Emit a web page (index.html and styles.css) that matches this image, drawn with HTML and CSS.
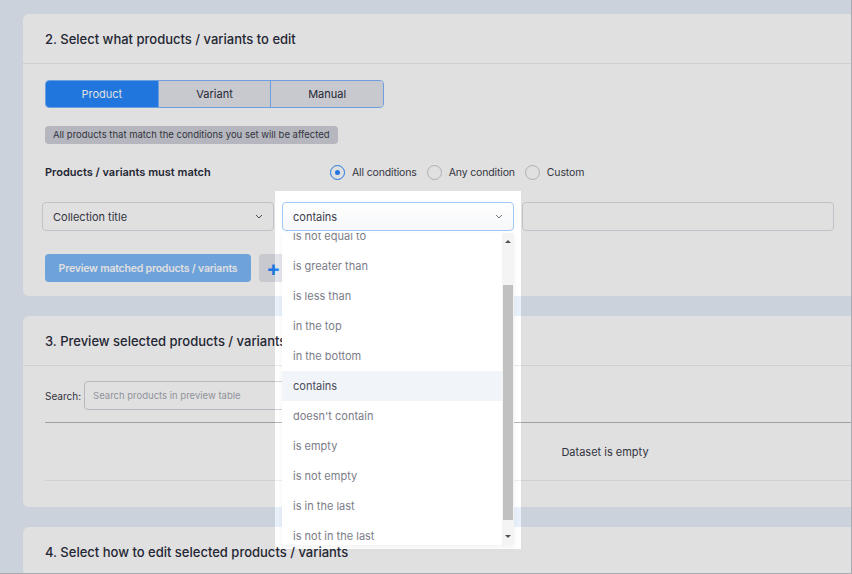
FILE: index.html
```html
<!DOCTYPE html>
<html lang="en">
<head>
    <meta charset="UTF-8">
    <meta name="viewport" content="width=device-width, initial-scale=1.0">
    <title>Bulk edit products</title>
    <link rel="stylesheet" href="styles.css">
</head>
<body>
    <div class="frame">
        <main class="page">
            <section class="card">
                <div class="card-head">
                    <h2>2. Select what products / variants to edit</h2>
                </div>
                <div class="card-body rules-body">
                    <div class="segmented">
                        <button class="seg active">Product</button>
                        <button class="seg">Variant</button>
                        <button class="seg">Manual</button>
                    </div>
                    <div class="hint-row"><span class="hint">All products that match the conditions you set will be affected</span></div>
                    <div class="match-row">
                        <strong>Products / variants must match</strong>
                        <label class="radio"><span class="dot checked"></span>All conditions</label>
                        <label class="radio"><span class="dot"></span>Any condition</label>
                        <label class="radio"><span class="dot"></span>Custom</label>
                    </div>
                    <div class="cond-row">
                        <div class="select">
                            <span>Collection title</span>
                            <svg class="chev" width="8" height="5" viewBox="0 0 8 5"><polyline points="1,1 4,4 7,1" fill="none" stroke="#555" stroke-width="1"/></svg>
                        </div>
                        <div class="select focused">
                            <span>contains</span>
                            <svg class="chev" width="8" height="5" viewBox="0 0 8 5"><polyline points="1,1 4,4 7,1" fill="none" stroke="#777" stroke-width="1"/></svg>
                            <div class="dropdown">
                                <ul class="options">
                                    <li class="cut">is not equal to</li>
                                    <li>is greater than</li>
                                    <li>is less than</li>
                                    <li>in the top</li>
                                    <li>in the bottom</li>
                                    <li class="hover">contains</li>
                                    <li>doesn't contain</li>
                                    <li>is empty</li>
                                    <li>is not empty</li>
                                    <li>is in the last</li>
                                    <li>is not in the last</li>
                                </ul>
                                <div class="scrollbar">
                                    <div class="arrow up"></div>
                                    <div class="track"><div class="thumb"></div></div>
                                    <div class="arrow down"></div>
                                </div>
                            </div>
                        </div>
                        <div class="text-input"></div>
                    </div>
                    <div class="actions">
                        <button class="btn-preview">Preview matched products / variants</button>
                        <button class="btn-add">+</button>
                    </div>
                </div>
            </section>

            <section class="card">
                <div class="card-head">
                    <h2>3. Preview selected products / variants</h2>
                </div>
                <div class="card-body preview-body">
                    <div class="search-row">
                        <span>Search:</span>
                        <div class="search-input">Search products in preview table</div>
                    </div>
                    <div class="table">
                        <div class="empty-row">Dataset is empty</div>
                    </div>
                </div>
            </section>

            <section class="card">
                <div class="card-head">
                    <h2>4. Select how to edit selected products / variants</h2>
                </div>
            </section>
        </main>

        <!-- tour highlight: dims the page around the open dropdown -->
        <div class="spotlight"></div>
    </div>
</body>
</html>
```

FILE: styles.css
```css
body {
    margin: 0;
    font-family: Inter, 'Open Sans', sans-serif;
    color: #2a2c3b;
    overflow: hidden;
}
.frame {
    position: relative;
    width: 851px;
    height: 573px;
    overflow: hidden;
    background-color: #e8f0fa;
    border-right: 1px solid #a9acb0;
    border-bottom: 1px solid #a9acb0;
}
.page {
    padding: 14px 0 0 23px;
    display: flex;
    flex-direction: column;
    gap: 20px;
}
.card {
    width: 1164px;
    background-color: #ffffff;
    border-radius: 6px;
}
.card-head {
    height: 50px;
    box-sizing: border-box;
    padding: 0 22px;
    display: flex;
    align-items: center;
    border-bottom: 1px solid #e9edf3;
}
.card-head h2 {
    margin: 0;
    font-size: 13px;
    font-weight: 500;
    color: #2a2c3b;
}
.card-body {
    padding: 15px 22px 14px;
}
.rules-body {
    padding-top: 16px;
}
.segmented {
    display: flex;
    width: 339px;
    height: 28px;
    border: 1px solid #7cb4ff;
    border-radius: 4px;
    overflow: hidden;
    box-sizing: border-box;
}
.seg {
    flex: 1;
    border: none;
    border-left: 1px solid #7cb4ff;
    background-color: #e4e5ec;
    font-family: inherit;
    font-size: 11px;
    color: #2a2c3b;
    padding: 0;
}
.seg:first-child {
    border-left: none;
}
.seg.active {
    background-color: #2687fd;
    color: #ffffff;
}
.hint-row {
    display: flex;
    margin-top: 18px;
}
.hint {
    height: 18px;
    line-height: 18px;
    padding: 0 8px;
    background-color: #ced0d9;
    border-radius: 4px;
    font-size: 9.5px;
    color: #3a3c48;
}
.match-row {
    display: flex;
    align-items: center;
    height: 18px;
    margin-top: 19px;
    font-size: 11px;
}
.match-row strong {
    width: 285px;
    font-weight: 600;
}
.radio {
    display: flex;
    align-items: center;
    gap: 7px;
    margin-right: 10px;
    font-size: 10.5px;
    letter-spacing: -0.15px;
    color: #3c3e4c;
}
.dot {
    width: 13px;
    height: 13px;
    border: 1px solid #c6c9d1;
    border-radius: 50%;
    display: flex;
    align-items: center;
    justify-content: center;
}
.dot.checked {
    border-color: #2687fd;
}
.dot.checked::after {
    content: '';
    width: 5px;
    height: 5px;
    border-radius: 50%;
    background-color: #2687fd;
}
.cond-row {
    display: flex;
    gap: 8px;
    margin: 21px 0 0 -3px;
}
.select {
    width: 232px;
    height: 29px;
    box-sizing: border-box;
    border: 1px solid #dcdfe6;
    border-radius: 4px;
    padding: 0 10px;
    display: flex;
    align-items: center;
    justify-content: space-between;
    font-size: 11px;
    color: #3a3c4a;
}
.select.focused {
    position: relative;
    border-color: #9fc8f7;
    background: linear-gradient(#ffffff, #f6f7f9);
}
.text-input {
    width: 312px;
    height: 29px;
    box-sizing: border-box;
    border: 1px solid #dcdfe6;
    border-radius: 4px;
}
.actions {
    display: flex;
    gap: 8px;
    margin-top: 23px;
}
.btn-preview {
    width: 206px;
    height: 28px;
    padding: 0;
    border: none;
    border-radius: 4px;
    background-color: #7eb9fa;
    color: #ffffff;
    font-family: inherit;
    font-size: 10.5px;
    font-weight: 600;
    letter-spacing: -0.2px;
    white-space: nowrap;
}
.btn-add {
    width: 29px;
    height: 28px;
    padding: 0;
    border: none;
    border-radius: 4px;
    background-color: #e4e5ec;
    color: #2687fd;
    font-family: inherit;
    font-size: 21px;
    font-weight: 700;
    line-height: 1;
}
.preview-body {
    padding-bottom: 26px;
}
.search-row {
    display: flex;
    align-items: center;
    gap: 3px;
    font-size: 10px;
    color: #3a3c4a;
}
.search-input {
    width: 300px;
    height: 29px;
    box-sizing: border-box;
    border: 1px solid #cfd3da;
    border-radius: 4px;
    padding: 0 8px;
    display: flex;
    align-items: center;
    font-size: 9.5px;
    color: #a6a8b2;
}
.table {
    margin-top: 12px;
    border-top: 1px solid #b7b7b9;
}
.empty-row {
    height: 57px;
    display: flex;
    align-items: center;
    justify-content: center;
    border-bottom: 1px solid #eceef3;
    font-size: 11px;
    color: #3a3c4a;
}
.dropdown {
    position: absolute;
    top: 30px;
    left: -1px;
    z-index: 5;
    width: 232px;
    height: 312px;
    display: flex;
    background-color: #ffffff;
    box-shadow: 0 2px 6px rgba(0, 0, 0, 0.06);
}
.options {
    flex: 1;
    margin: 0;
    padding: 0;
    list-style: none;
    overflow: hidden;
}
.options li {
    height: 30px;
    line-height: 30px;
    padding-left: 11px;
    font-size: 11px;
    color: #7b7d88;
}
.options li.cut {
    margin-top: -12px;
}
.options li.hover {
    background-color: #f1f4f8;
    color: #4a4c58;
}
.scrollbar {
    width: 12px;
    display: flex;
    flex-direction: column;
    background-color: #f4f4f4;
}
.arrow {
    height: 17px;
    display: flex;
    align-items: center;
    justify-content: center;
}
.arrow.up::after {
    content: '';
    border-left: 3px solid transparent;
    border-right: 3px solid transparent;
    border-bottom: 3px solid #505050;
}
.arrow.down::after {
    content: '';
    border-left: 3px solid transparent;
    border-right: 3px solid transparent;
    border-top: 3px solid #505050;
}
.track {
    flex: 1;
    padding: 35px 1px 0;
}
.thumb {
    height: 235px;
    background-color: #c1c1c1;
}
.spotlight {
    position: absolute;
    left: 275px;
    top: 191px;
    width: 246px;
    height: 358px;
    z-index: 10;
    pointer-events: none;
    box-shadow: 8px 6px 22px 2000px rgba(0, 0, 0, 0.12);
}
```
